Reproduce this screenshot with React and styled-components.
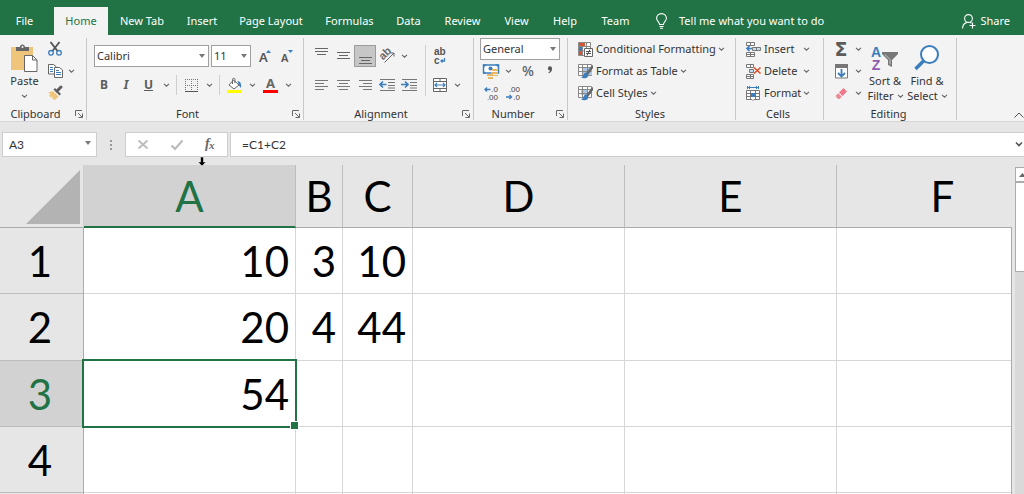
import React, { useState } from "react"
import styled, { createGlobalStyle, css } from "styled-components"

const green = "#217346"
const blue = "#3b7dbd"
const ink = "#5c5c5c"
const ui = '"Noto Sans", "Open Sans", sans-serif'
const sheet = 'Lato, "Noto Sans", sans-serif'

const GlobalStyle = createGlobalStyle`
  * {
    box-sizing: border-box;
  }

  body {
    margin: 0;
    background: #e6e6e6;
    font-family: ${ui};
    font-size: 11px;
    line-height: 16px;
    color: #333;
  }

  button, input, select {
    font: inherit;
    color: inherit;
    margin: 0;
    padding: 0;
    border: 0;
    background: none;
  }

  svg {
    display: block;
    flex: none;
    overflow: visible;
  }
`

const Window = styled.div`
  display: flex;
  flex-direction: column;
  height: 100vh;
  overflow: hidden;
`

/* tabs */

const TabBar = styled.nav`
  display: flex;
  align-items: flex-end;
  height: 35px;
  flex: none;
  background: ${green};
  color: #fff;
`

const Tab = styled.button`
  width: ${p => p.$width}px;
  height: 28px;
  flex: none;
  white-space: nowrap;
  text-align: center;

  &:first-child {
    margin-right: 5px;
  }

  ${p => p.$active && css`
    background: #f3f3f3;
    color: ${green};
  `}
`

const TabAction = styled.button`
  display: flex;
  align-items: center;
  gap: ${p => p.$gap}px;
  height: 28px;
  margin-left: ${p => (p.$end ? "auto" : "15px")};
  margin-right: ${p => (p.$end ? "14px" : "0")};
  white-space: nowrap;
`

/* ribbon */

const Ribbon = styled.div`
  display: flex;
  flex: none;
  height: 87px;
  padding-top: 3px;
  background: #f3f3f3;
  border-bottom: 1px solid #d5d5d5;
`

const GroupBox = styled.section`
  display: flex;
  flex-direction: column;
  width: ${p => p.$width}px;
  height: 82px;
  flex: none;
  border-right: 1px solid #c8c8c8;
`

const GroupBody = styled.div`
  display: flex;
  flex: none;
  height: 68px;
  padding-left: ${p => p.$left || 0}px;
`

const GroupFooter = styled.div`
  display: flex;
  flex: none;
  height: 16px;
  align-items: center;
  padding-right: 3px;
`

const GroupName = styled.h2`
  flex: 1;
  margin: 0;
  padding-right: ${p => (p.$launcher ? 4 : 0)}px;
  font-size: 11px;
  font-weight: 400;
  text-align: center;
`

const Stack = styled.div`
  display: flex;
  flex-direction: column;
  padding-top: ${p => p.$top || 0}px;
  gap: ${p => p.$gap || 0}px;
`

const Row = styled.div`
  display: flex;
  align-items: center;
  height: 22px;
`

const Tool = styled.button`
  display: flex;
  align-items: center;
  justify-content: center;
  width: ${p => p.$width || 22}px;
  height: 22px;
  flex: none;
  color: ${ink};

  ${p => p.$pressed && css`
    background: #c6c6c6;
    border: 1px solid #9c9c9c;
  `}
`

const Letter = styled.span`
  font-size: ${p => p.$size || 12}px;
  line-height: 16px;
  font-weight: ${p => (p.$bold ? 700 : 500)};
  font-style: ${p => (p.$italic ? "italic" : "normal")};
  text-decoration: ${p => (p.$underline ? "underline" : "none")};
`

const Sigma = styled.span`
  font-family: "DejaVu Sans", sans-serif;
  font-size: 19px;
  font-weight: 700;
  line-height: 20px;
`

const BigTool = styled.button`
  display: flex;
  flex-direction: column;
  align-items: center;
  width: ${p => p.$width}px;
  height: 68px;
  padding-top: 4px;
  white-space: nowrap;
  line-height: 15px;
`

const BigIcon = styled.span`
  display: flex;
  align-items: center;
  height: 31px;
`

const BigLine = styled.span`
  display: flex;
  align-items: center;
  gap: 4px;
  height: 15px;
`

const TextTool = styled.button`
  display: flex;
  align-items: center;
  gap: 3px;
  height: 22px;
  white-space: nowrap;
`

const CellLabel = styled.span`
  min-width: 37px;
  text-align: left;
`

const Divider = styled.span`
  width: 1px;
  height: ${p => p.$height || 20}px;
  margin: 0 ${p => p.$gap || 3}px;
  background: #cfcfcf;
`

const Picker = styled.label`
  position: relative;
  display: block;
  width: ${p => p.$width}px;
  height: 22px;
  margin-right: 2px;

  select {
    appearance: none;
    width: 100%;
    height: 100%;
    padding-left: 2px;
    background: #fff;
    border: 1px solid #a0a0a0;
    border-radius: 0;
  }

  svg {
    position: absolute;
    right: 4px;
    top: 9px;
    pointer-events: none;
  }
`

const Collapse = styled.button`
  display: flex;
  align-items: flex-end;
  margin-left: auto;
  height: 80px;
`

/* formula bar */

const FormulaBar = styled.div`
  display: flex;
  flex: none;
  height: 43px;
  padding: 10px 0 8px 2px;
  font-family: ${sheet};
  font-size: 12px;
`

const NameBox = styled.label`
  position: relative;
  width: 95px;
  height: 25px;

  input {
    width: 100%;
    height: 100%;
    padding-left: 6px;
    background: #fff;
    border: 1px solid #cdcdcd;
  }

  svg {
    position: absolute;
    right: 6px;
    top: 9px;
  }
`

const Dots = styled.span`
  display: flex;
  align-items: center;
  justify-content: center;
  width: 28px;
  height: 25px;
`

const FormulaActions = styled.div`
  position: relative;
  display: flex;
  align-items: center;
  width: 103px;
  height: 25px;
  margin-right: 2px;
  background: #fff;
  border: 1px solid #cdcdcd;
`

const FormulaAction = styled.button`
  display: flex;
  align-items: center;
  justify-content: center;
  flex: 1;
  height: 23px;
  font-family: "Liberation Serif", serif;
  font-style: italic;
  font-weight: 700;
`

const Pointer = styled.span`
  position: absolute;
  left: 72px;
  top: 24px;
  z-index: 1;
`

const FormulaField = styled.label`
  display: flex;
  align-items: center;
  flex: 1;
  height: 25px;
  padding-right: 1px;
  background: #fff;
  border: 1px solid #cdcdcd;
  border-right: 0;

  input {
    flex: 1;
    min-width: 0;
    height: 23px;
    padding-left: 11px;
    outline: 0;
  }
`

/* sheet */

const Sheet = styled.main`
  display: flex;
  flex: 1;
  min-height: 0;
`

const Viewport = styled.div`
  flex: 1;
  min-width: 0;
  overflow: hidden;
`

const Table = styled.table`
  width: 1049px;
  table-layout: fixed;
  border-collapse: separate;
  border-spacing: 0;
  font-family: ${sheet};
  font-size: 42px;
  line-height: 56px;
  color: #000;
`

const HeadRow = styled.tr`
  height: 63px;
`

const SheetRow = styled.tr`
  height: ${p => p.$height}px;
`

const Corner = styled.td`
  padding: 5px 3px 3px 26px;
  border-right: 1px solid #cfcfcf;
  border-bottom: 1px solid #ababab;
`

const CornerMark = styled.div`
  height: 54px;
  background: #b3b3b3;
  clip-path: polygon(100% 0, 100% 100%, 0 100%);
`

const Header = styled.th`
  padding: 0;
  font-weight: 400;
  color: ${p => (p.$active ? green : "#000")};
  background: ${p => (p.$active ? "#d2d2d2" : "#e6e6e6")};
`

const ColumnHeader = styled(Header)`
  border-right: 1px solid #bdbdbd;
  border-bottom: ${p => (p.$active ? `2px solid ${green}` : "1px solid #ababab")};
`

const RowHeader = styled(Header)`
  padding-right: 3px;
  border-right: 1px solid #ababab;
  border-bottom: 1px solid #bdbdbd;
`

const Cell = styled.td`
  position: relative;
  padding: 0 6px 0 0;
  text-align: right;
  background: #fff;
  border-right: 1px solid #d6d6d6;
  border-bottom: 1px solid #d6d6d6;
`

const Selection = styled.span`
  position: absolute;
  inset: -2px;
  z-index: 1;
  border: 2px solid ${green};

  &::after {
    content: "";
    position: absolute;
    right: -4px;
    bottom: -4px;
    width: 7px;
    height: 7px;
    background: ${green};
    border: 1px solid #fff;
  }
`

const Gutter = styled.div`
  width: 4px;
  margin-top: 62px;
  border-left: 1px solid #ababab;
`

const ScrollBar = styled.div`
  width: 9px;
  margin-top: 2px;
  overflow: hidden;
  background: #d9d9d9;
`

const ScrollButton = styled.button`
  display: flex;
  align-items: center;
  width: 17px;
  height: 15px;
  padding-left: 3px;
  background: #fff;
  border: 1px solid #ababab;
`

const ScrollThumb = styled.div`
  width: 17px;
  height: 90px;
  background: #fff;
  border: 1px solid #ababab;
`

/* icons */

const tight = '"Liberation Sans", Arial, sans-serif'

const Chevron = () => (
  <svg width="5" height="4" viewBox="0 0 5 4">
    <path d="M0 .8 2.500 3.200 5 .8" fill="none" stroke="#666" strokeWidth="1.100" />
  </svg>
)

const Caret = () => (
  <svg width="6" height="4" viewBox="0 0 6 4">
    <path d="M0 0h6L3 4z" fill="#777" />
  </svg>
)

const LauncherIcon = () => (
  <svg width="8" height="8" viewBox="0 0 8 8" fill="none" stroke="#666">
    <path d="M.5 6V.5H7M3 3l4 4M7.500 3.500v4h-4" />
  </svg>
)

const BulbIcon = () => (
  <svg width="11" height="16" viewBox="0 0 11 16" fill="none" stroke="#fff" strokeWidth="1.100">
    <path d="M3.500 11.500C3.500 9 .6 8.300.6 5.300a4.900 4.700 0 0 1 9.800 0c0 3-2.900 3.700-2.900 6.200zM3.500 13.500h4M4 15.300h3" />
  </svg>
)

const PersonIcon = () => (
  <svg width="14" height="15" viewBox="0 0 14 15" fill="none" stroke="#fff" strokeWidth="1.100">
    <circle cx="6.500" cy="4.500" r="3.900" />
    <path d="M.6 14.500c0-3.500 2-5.400 4.400-6.100M8 8.400l1.500.9M10.500 8.500v6M7.500 11.500h6" />
  </svg>
)

const PasteIcon = () => (
  <svg width="27" height="28" viewBox="0 0 27 28">
    <path d="M0 3h22v23H0z" fill="#efc57b" />
    <path d="M5 7V3h4a2.500 2.500 0 0 1 5 0h4v4z" fill="#666" />
    <circle cx="11.500" cy="3" r="1" fill="#fff" />
    <path d="M13.500 11.500h8l4.500 4.500v11.500H13.500z" fill="#fff" stroke="#666" />
    <path d="M21.500 11.500V16H26" fill="none" stroke="#666" />
  </svg>
)

const CutIcon = () => (
  <svg width="14" height="14" viewBox="0 0 14 14" fill="none">
    <path d="M2.500 0 9.500 9M11.500 0 4.500 9" stroke="#555" strokeWidth="1.900" />
    <circle cx="3" cy="10.800" r="2.300" stroke={blue} strokeWidth="1.300" />
    <circle cx="11" cy="10.800" r="2.300" stroke={blue} strokeWidth="1.300" />
  </svg>
)

const CopyIcon = () => (
  <svg width="15" height="14" viewBox="0 0 15 14" fill="#fff" stroke="#666">
    <path d="M.5.5h5l2.500 2v7.500H.5z" />
    <path d="M2 3.500h3M2 5.500h3M2 7.500h3" stroke={blue} />
    <path d="M6.500 3.500h5l3 2.500v7.500h-8z" />
    <path d="M8 6.500h3M8 8.500h5M8 10.500h5" stroke={blue} />
  </svg>
)

const BrushIcon = () => (
  <svg width="15" height="14" viewBox="0 0 15 14">
    <path d="M0 6.500 5 5l5.500 5.500L7 14l-3-1.500 1-2-2 1-2-2 1.500-1.500z" fill="#efc57b" />
    <path d="M5.500 3.500l6 6 1.500-1.500-6-6z" fill="#5c5c5c" />
    <path d="M9 5 13 1" stroke="#5c5c5c" strokeWidth="3" strokeLinecap="round" />
  </svg>
)

const BorderIcon = () => (
  <svg width="13" height="13" viewBox="0 0 13 13" fill="none" stroke="#777">
    <path d="M.5 0v12M12.500 0v12M6.500 0v12M0 .5h13M0 6.500h13" strokeDasharray="1 1" />
    <path d="M0 12.500h13" stroke="#555" />
  </svg>
)

const FillIcon = () => (
  <svg width="15" height="15" viewBox="0 0 15 15">
    <path d="M6.500 2 12 7l-5 4-5-4z" fill="#fff" stroke="#666" />
    <path d="M5.500 6V1.500a1.200 1.200 0 0 1 2.400 0V5" fill="none" stroke="#666" />
    <path d="M10.500 3c3 .3 4 3 3.500 7l-2-2.500z" fill={blue} />
    <path d="M0 12h15v3H0z" fill="#ff0" />
  </svg>
)

const FontColorIcon = () => (
  <svg width="15" height="15" viewBox="0 0 15 15">
    <text x="7.500" y="10" textAnchor="middle" fontSize="13" fontWeight="700" fill="#666">A</text>
    <path d="M0 12h15v3H0z" fill="#f00" />
  </svg>
)

const FontSizeIcon = ({ size, down }) => (
  <svg width="13" height="14" viewBox="0 0 13 14">
    <text x="1" y="13" fontSize={size} fontWeight="600" fill="#555">A</text>
    <path d={down ? "M8 1h5l-2.500 3z" : "M8 4h5l-2.500-3z"} fill={blue} />
  </svg>
)

const LinesIcon = ({ align }) => (
  <svg width="13" height="10" viewBox="0 0 13 10" fill="#777">
    {[13, 9, 13, 9].map((w, i) => (
      <rect
        key={i}
        x={align === "left" ? 0 : align === "center" ? (13 - w) / 2 : 13 - w}
        y={i * 3}
        width={w}
        height="1"
      />
    ))}
  </svg>
)

const VAlignIcon = ({ y, short }) => (
  <svg width="13" height="20" viewBox="0 0 13 20" fill="#666">
    <path d={`M0 ${y}h13v1H0zM${short ? 2 : 0} ${y + 3}h${short ? 9 : 13}v1h-${short ? 9 : 13}zM${short ? 0 : 2} ${y + 6}h${short ? 13 : 9}v1h-${short ? 13 : 9}z`} />
  </svg>
)

const OrientIcon = () => (
  <svg width="15" height="14" viewBox="0 0 15 14">
    <text x="1" y="9" fontFamily={tight} fontSize="11" fontWeight="700" fill="#666" transform="rotate(-45 5 8)">ab</text>
    <path d="M4.500 13.500 14 4M10.500 4H14v3.500" fill="none" stroke="#666" />
  </svg>
)

const WrapIcon = () => (
  <svg width="12" height="16" viewBox="0 0 12 16" fontFamily={tight} fontSize="10" fontWeight="700" fill="#555">
    <text x="0" y="7">ab</text>
    <text x="0" y="16">c</text>
    <path d="M10.500 10v3H7M8.500 11.500 7 13l1.500 1.500" fill="none" stroke={blue} strokeWidth="1.300" />
  </svg>
)

const IndentIcon = ({ right }) => (
  <svg width="16" height="12" viewBox="0 0 16 12" fill="none">
    <path d="M1 .5h15M9 3.500h7M9 6.500h7M9 9h7M1 11.500h15" stroke="#777" />
    <path
      d={right ? "M0 5.500h6.500M4 2.500l3 3-3 3" : "M7.500 5.500H1M4 2.500l-3 3 3 3"}
      stroke={blue}
      strokeWidth="1.700"
    />
  </svg>
)

const MergeIcon = () => (
  <svg width="14" height="14" viewBox="0 0 14 14" fill="none" stroke="#666">
    <path d="M.5.500h13v13H.5zM.5 3.500h13M.5 10.500h13M7 0v3M7 11v3" fill="#fff" />
    <path d="M2 7h10M4 5 2 7l2 2M10 5l2 2-2 2" stroke={blue} strokeWidth="1.200" />
  </svg>
)

const MoneyIcon = () => (
  <svg width="16" height="15" viewBox="0 0 16 15">
    <path d="M.5 1h15v8H.5z" fill="#fff" stroke={blue} strokeWidth="1.500" />
    <path d="M0 .500h4L0 4zM16 .500h-4L16 4zM0 9.500h3L0 6z" fill={blue} />
    <circle cx="7.500" cy="4.500" r="2" fill={blue} />
    <path d="M9 5h6v2H9zM8 8h7v2H8zM4 10h6v2H4zM5 13h5v2H5zM10 11h5v1h-5z" fill="#e9b75f" />
  </svg>
)

const CommaIcon = () => (
  <svg width="6" height="10" viewBox="0 0 6 10">
    <path d="M1 2.500a2 2 0 0 1 4-.3c.2 2.500-1 4.300-3.200 5L1.300 6.300C2.500 5.800 3 5.200 3 4.500 1.800 4.500 1 3.700 1 2.500z" fill="#555" />
  </svg>
)

const DecimalIcon = ({ less }) => (
  <svg width="14" height="14" viewBox="0 0 14 14" fontFamily={tight} fontSize="8" fill="#444" textAnchor="end">
    <text x="14" y="6">{less ? ".00" : ".0"}</text>
    <text x="14" y="14">{less ? ".0" : ".00"}</text>
    <path
      d={less ? "M0 11h5.500M3.500 9l2 2-2 2" : "M1 3.500h5.500M3 1.500l-2 2 2 2"}
      fill="none"
      stroke={blue}
      strokeWidth="1.400"
    />
  </svg>
)

const ConditionalIcon = () => (
  <svg width="15" height="15" viewBox="0 0 15 15">
    <path d="M.5.500h12v13H.5zM.5 4.500h12M.5 9h12M4.500.500v13M8.500.500v13" fill="#fff" stroke="#888" />
    <path d="M1 1h6v3H1zM1 9h3v4H1z" fill="#d65532" />
    <path d="M1 5h3v4H1z" fill={blue} />
    <path d="M6.500 6.500h8v8h-8z" fill="#fff" stroke="#666" />
    <path d="M8 9.500h5M8 11.500h5M12 7.500l-3 6" stroke="#555" />
  </svg>
)

const TableIcon = ({ styles }) => (
  <svg width="15" height="15" viewBox="0 0 15 15">
    <path d="M.5.500h13v11H.5z" fill="#fff" stroke="#888" />
    <path d={styles ? "M3 3h7v6H3z" : "M5 4h9v7H5z"} fill="#a9c9ea" />
    <path d="M.5 3.500h13M.5 7.500h13M4.500.500v11M9.500.500v11" fill="none" stroke="#888" />
    <path d="M13.500 2 8 9l2 2 5-7V1z" fill="#666" />
    <path d="M8 8.500c-3 0-2 4-5 5 3 1.500 8 1 7-3z" fill={blue} />
  </svg>
)

const InsertIcon = () => (
  <svg width="15" height="15" viewBox="0 0 15 15" fill="#fff" stroke="#777">
    <path d="M.5.500h8v3h-8zM4.500.500v3M.5 10.500h8v4h-8zM4.500 10v4M.5 12.500h8" />
    <path d="M6.500 5.500h8v3h-8zM10.500 5.500v3" fill="#c7dbef" />
    <path d="M6 6.500H1M3.500 4 1 6.500 3.500 9" stroke={blue} strokeWidth="1.700" fill="none" />
  </svg>
)

const DeleteIcon = () => (
  <svg width="15" height="15" viewBox="0 0 15 15" fill="#fff" stroke="#777">
    <path d="M.5.500h7v3h-7zM4.500.500v3M.5 10.500h7v4h-7zM4.500 10v4M.5 12.500h7" />
    <path d="M3.500 5.500h4v3h-4z" fill="#c7dbef" />
    <path d="M8 3.500l6.500 6M14.500 3.500 8 9.500" stroke="#d65532" strokeWidth="1.700" />
  </svg>
)

const FormatIcon = () => (
  <svg width="15" height="15" viewBox="0 0 15 15" fill="none" stroke="#777">
    <path d="M1 1.500h12M1.500 0v3M12.500 0v3M4 0 2.500 1.500 4 3M10 0l1.500 1.500L10 3" stroke={blue} />
    <path d="M.5 4.500h13v9H8l-1 1-1-1H.5zM.5 7.500h13M.5 10.500h13M4.500 4.500v9M9.500 4.500v9" fill="#fff" />
    <path d="M5 7h5v4H5z" fill={blue} stroke="none" />
  </svg>
)

const FillDownIcon = () => (
  <svg width="13" height="15" viewBox="0 0 13 15">
    <path d="M.5.500h12v13.500H.5z" fill="#fff" stroke="#777" />
    <path d="M0 0h13v4H0z" fill="#777" />
    <path d="M6.500 5v7.500M3 9l3.500 3.500L10 9" fill="none" stroke={blue} strokeWidth="1.800" />
  </svg>
)

const EraserIcon = () => (
  <svg width="13" height="13" viewBox="0 0 13 13">
    <path d="M8.500 1 12 4.500 7.500 9 4 5.500z" fill="#f0788a" />
    <path d="M3.300 6.200 6.800 9.700 4.500 12H3L.8 9.500V8.500z" fill="#e98c98" />
  </svg>
)

const SortIcon = () => (
  <svg width="28" height="26" viewBox="0 0 28 26" fontFamily={tight} textAnchor="middle">
    <text x="5" y="12" fontSize="14" fontWeight="700" fill={blue}>A</text>
    <text x="5" y="25" fontSize="14" fontWeight="700" fill="#8e5bb0">Z</text>
    <path d="M11 7h16v2l-6 6v7l-4-2v-5l-6-6z" fill="#777" />
    <path d="M14 9.500l5 5v5" fill="none" stroke="#ccc" />
  </svg>
)

const FindIcon = () => (
  <svg width="26" height="26" viewBox="0 0 26 26" fill="none" stroke={blue}>
    <path d="M9.500 16 1.500 24" strokeWidth="3.500" />
    <circle cx="15.500" cy="9.500" r="8.500" fill="#fff" strokeWidth="2" />
  </svg>
)

const Group = ({ name, width, left, launcher, children }) => (
  <GroupBox $width={width}>
    <GroupBody $left={left}>{children}</GroupBody>
    <GroupFooter>
      <GroupName $launcher={launcher}>{name}</GroupName>
      {launcher && (
        <button aria-label={`${name} settings`}><LauncherIcon /></button>
      )}
    </GroupFooter>
  </GroupBox>
)

const MenuArrow = ({ label, width = 14 }) => (
  <Tool $width={width} aria-label={`${label} options`}><Chevron /></Tool>
)

const tabs = [
  ["File", 49],
  ["Home", 54],
  ["New Tab", 68],
  ["Insert", 52],
  ["Page Layout", 86],
  ["Formulas", 71],
  ["Data", 47],
  ["Review", 61],
  ["View", 47],
  ["Help", 50],
  ["Team", 51]
]

const columns = [
  ["A", 212],
  ["B", 47],
  ["C", 70],
  ["D", 212],
  ["E", 212],
  ["F", 212]
]

const rows = [
  { label: "1", height: 66, values: { A: 10, B: 3, C: 10 } },
  { label: "2", height: 67, values: { A: 20, B: 4, C: 44 } },
  { label: "3", height: 66, values: { A: 54 } },
  { label: "4", height: 66, values: {} },
  { label: "", height: 66, values: {} }
]

const App = () => {
  const [tab, setTab] = useState("Home")
  const [formula, setFormula] = useState("=C1+C2")

  return (
    <Window>
      <GlobalStyle />

      <TabBar>
        {tabs.map(([name, width]) => (
          <Tab key={name} $width={width} $active={tab === name} onClick={() => setTab(name)}>
            {name}
          </Tab>
        ))}
        <TabAction $gap={12}><BulbIcon />Tell me what you want to do</TabAction>
        <TabAction $gap={4} $end><PersonIcon />Share</TabAction>
      </TabBar>

      <Ribbon>
        <Group name="Clipboard" width={87} left={2} launcher>
          <BigTool $width={45}>
            <BigIcon><PasteIcon /></BigIcon>
            <BigLine>Paste</BigLine>
            <BigLine><Chevron /></BigLine>
          </BigTool>
          <Stack>
            <Tool $width={16} aria-label="Cut"><CutIcon /></Tool>
            <Row>
              <Tool $width={16} aria-label="Copy"><CopyIcon /></Tool>
              <MenuArrow label="Copy" width={16} />
            </Row>
            <Tool $width={16} aria-label="Format Painter"><BrushIcon /></Tool>
          </Stack>
        </Group>

        <Group name="Font" width={217} left={7} launcher>
          <Stack $top={7} $gap={7}>
            <Row>
              <Picker $width={115}>
                <select aria-label="Font name"><option>Calibri</option></select>
                <Caret />
              </Picker>
              <Picker $width={40}>
                <select aria-label="Font size"><option>11</option></select>
                <Caret />
              </Picker>
              <Tool aria-label="Increase font size"><FontSizeIcon size={13} /></Tool>
              <Tool aria-label="Decrease font size"><FontSizeIcon size={11} down /></Tool>
            </Row>
            <Row>
              <Tool $width={20}><Letter $bold>B</Letter></Tool>
              <Tool $width={24}><Letter $bold $italic>I</Letter></Tool>
              <Tool $width={21}><Letter $bold $underline>U</Letter></Tool>
              <MenuArrow label="Underline" />
              <Divider />
              <Tool aria-label="Borders"><BorderIcon /></Tool>
              <MenuArrow label="Borders" />
              <Divider />
              <Tool aria-label="Fill color"><FillIcon /></Tool>
              <MenuArrow label="Fill color" />
              <Tool aria-label="Font color"><FontColorIcon /></Tool>
              <MenuArrow label="Font color" />
            </Row>
          </Stack>
        </Group>

        <Group name="Alignment" width={170} left={6} launcher>
          <Stack $top={7} $gap={7}>
            <Row>
              <Tool aria-label="Top align"><VAlignIcon y={2} /></Tool>
              <Tool aria-label="Middle align"><VAlignIcon y={6} short /></Tool>
              <Tool aria-label="Bottom align" $pressed><VAlignIcon y={11} short /></Tool>
              <Tool aria-label="Orientation"><OrientIcon /></Tool>
              <MenuArrow label="Orientation" width={12} />
            </Row>
            <Row>
              <Tool aria-label="Align left"><LinesIcon align="left" /></Tool>
              <Tool aria-label="Center"><LinesIcon align="center" /></Tool>
              <Tool aria-label="Align right"><LinesIcon align="right" /></Tool>
              <Tool aria-label="Decrease indent"><IndentIcon /></Tool>
              <Tool aria-label="Increase indent"><IndentIcon right /></Tool>
            </Row>
          </Stack>
          <Stack $top={7}>
            <Divider $height={51} $gap={5} />
          </Stack>
          <Stack $top={7} $gap={7}>
            <Tool $width={18} aria-label="Wrap text"><WrapIcon /></Tool>
            <Row>
              <Tool $width={18} aria-label="Merge and center"><MergeIcon /></Tool>
              <MenuArrow label="Merge" width={16} />
            </Row>
          </Stack>
        </Group>

        <Group name="Number" width={94} left={6} launcher>
          <Stack>
            <Picker $width={80}>
              <select aria-label="Number format"><option>General</option></select>
              <Caret />
            </Picker>
            <Row>
              <Tool aria-label="Accounting format"><MoneyIcon /></Tool>
              <MenuArrow label="Accounting" width={12} />
              <Tool $width={28}><Letter $size={14}>%</Letter></Tool>
              <Tool $width={16} aria-label="Comma style"><CommaIcon /></Tool>
            </Row>
            <Row>
              <Tool aria-label="Increase decimal"><DecimalIcon /></Tool>
              <Tool aria-label="Decrease decimal"><DecimalIcon less /></Tool>
            </Row>
          </Stack>
        </Group>

        <Group name="Styles" width={168} left={10}>
          <Stack>
            <TextTool><ConditionalIcon />Conditional Formatting<Chevron /></TextTool>
            <TextTool><TableIcon />Format as Table<Chevron /></TextTool>
            <TextTool><TableIcon styles />Cell Styles<Chevron /></TextTool>
          </Stack>
        </Group>

        <Group name="Cells" width={88} left={10}>
          <Stack>
            <TextTool><InsertIcon /><CellLabel>Insert</CellLabel><Chevron /></TextTool>
            <TextTool><DeleteIcon /><CellLabel>Delete</CellLabel><Chevron /></TextTool>
            <TextTool><FormatIcon /><CellLabel>Format</CellLabel><Chevron /></TextTool>
          </Stack>
        </Group>

        <Group name="Editing" width={133} left={6}>
          <Stack>
            <Row>
              <Tool aria-label="AutoSum"><Sigma>Σ</Sigma></Tool>
              <MenuArrow label="AutoSum" width={12} />
            </Row>
            <Row>
              <Tool aria-label="Fill"><FillDownIcon /></Tool>
              <MenuArrow label="Fill" width={12} />
            </Row>
            <Row>
              <Tool aria-label="Clear"><EraserIcon /></Tool>
              <MenuArrow label="Clear" width={12} />
            </Row>
          </Stack>
          <BigTool $width={42}>
            <BigIcon><SortIcon /></BigIcon>
            <BigLine>Sort &amp;</BigLine>
            <BigLine>Filter<Chevron /></BigLine>
          </BigTool>
          <BigTool $width={42}>
            <BigIcon><FindIcon /></BigIcon>
            <BigLine>Find &amp;</BigLine>
            <BigLine>Select<Chevron /></BigLine>
          </BigTool>
        </Group>

        <Collapse aria-label="Collapse the ribbon">
          <svg width="10" height="6" viewBox="0 0 10 6">
            <path d="M.5 5.500 5 1l4.500 4.500" fill="none" stroke="#555" />
          </svg>
        </Collapse>
      </Ribbon>

      <FormulaBar>
        <NameBox>
          <input aria-label="Name box" defaultValue="A3" />
          <Caret />
        </NameBox>
        <Dots>
          <svg width="2" height="10" viewBox="0 0 2 10" fill="#999">
            <path d="M0 0h2v2H0zM0 4h2v2H0zM0 8h2v2H0z" />
          </svg>
        </Dots>
        <FormulaActions>
          <FormulaAction aria-label="Cancel">
            <svg width="10" height="9" viewBox="0 0 10 9">
              <path d="M.5.500l9 8M9.500.500l-9 8" stroke="#bbb" strokeWidth="1.700" />
            </svg>
          </FormulaAction>
          <FormulaAction aria-label="Enter">
            <svg width="12" height="10" viewBox="0 0 12 10">
              <path d="M.5 5.500 4 9l7.500-8.500" fill="none" stroke="#bbb" strokeWidth="2.200" />
            </svg>
          </FormulaAction>
          <FormulaAction aria-label="Insert function">
            <svg width="12" height="14" viewBox="0 0 12 14" fill="#666">
              <text x="1" y="10" fontSize="14">f</text>
              <text x="5" y="11" fontSize="11">x</text>
            </svg>
          </FormulaAction>
          <Pointer>
            <svg width="8" height="9" viewBox="0 0 8 9">
              <path d="M2.500 0h3v5H8L4 9 0 5h2.500z" fill="#000" stroke="#fff" strokeWidth=".5" />
            </svg>
          </Pointer>
        </FormulaActions>
        <FormulaField>
          <input aria-label="Formula" value={formula} onChange={e => setFormula(e.target.value)} />
          <svg width="8" height="5" viewBox="0 0 8 5">
            <path d="M1 .5 4 3.500 7 .5" fill="none" stroke="#555" strokeWidth="1.600" />
          </svg>
        </FormulaField>
      </FormulaBar>

      <Sheet>
        <Viewport>
          <Table>
            <colgroup>
              <col width="84" />
              {columns.map(([name, width]) => <col key={name} width={width} />)}
            </colgroup>
            <thead>
              <HeadRow>
                <Corner><CornerMark /></Corner>
                {columns.map(([name]) => (
                  <ColumnHeader key={name} scope="col" $active={name === "A"}>{name}</ColumnHeader>
                ))}
              </HeadRow>
            </thead>
            <tbody>
              {rows.map(row => (
                <SheetRow key={row.label} $height={row.height}>
                  <RowHeader scope="row" $active={row.label === "3"}>{row.label}</RowHeader>
                  {columns.map(([name]) => (
                    <Cell key={name}>
                      {row.values[name]}
                      {name === "A" && row.label === "3" && <Selection />}
                    </Cell>
                  ))}
                </SheetRow>
              ))}
            </tbody>
          </Table>
        </Viewport>
        <Gutter />
        <ScrollBar>
          <ScrollButton aria-label="Scroll up">
            <svg width="7" height="4" viewBox="0 0 7 4"><path d="M0 4h7L3.500 0z" fill="#666" /></svg>
          </ScrollButton>
          <ScrollThumb />
        </ScrollBar>
      </Sheet>
    </Window>
  )
}

export default App
